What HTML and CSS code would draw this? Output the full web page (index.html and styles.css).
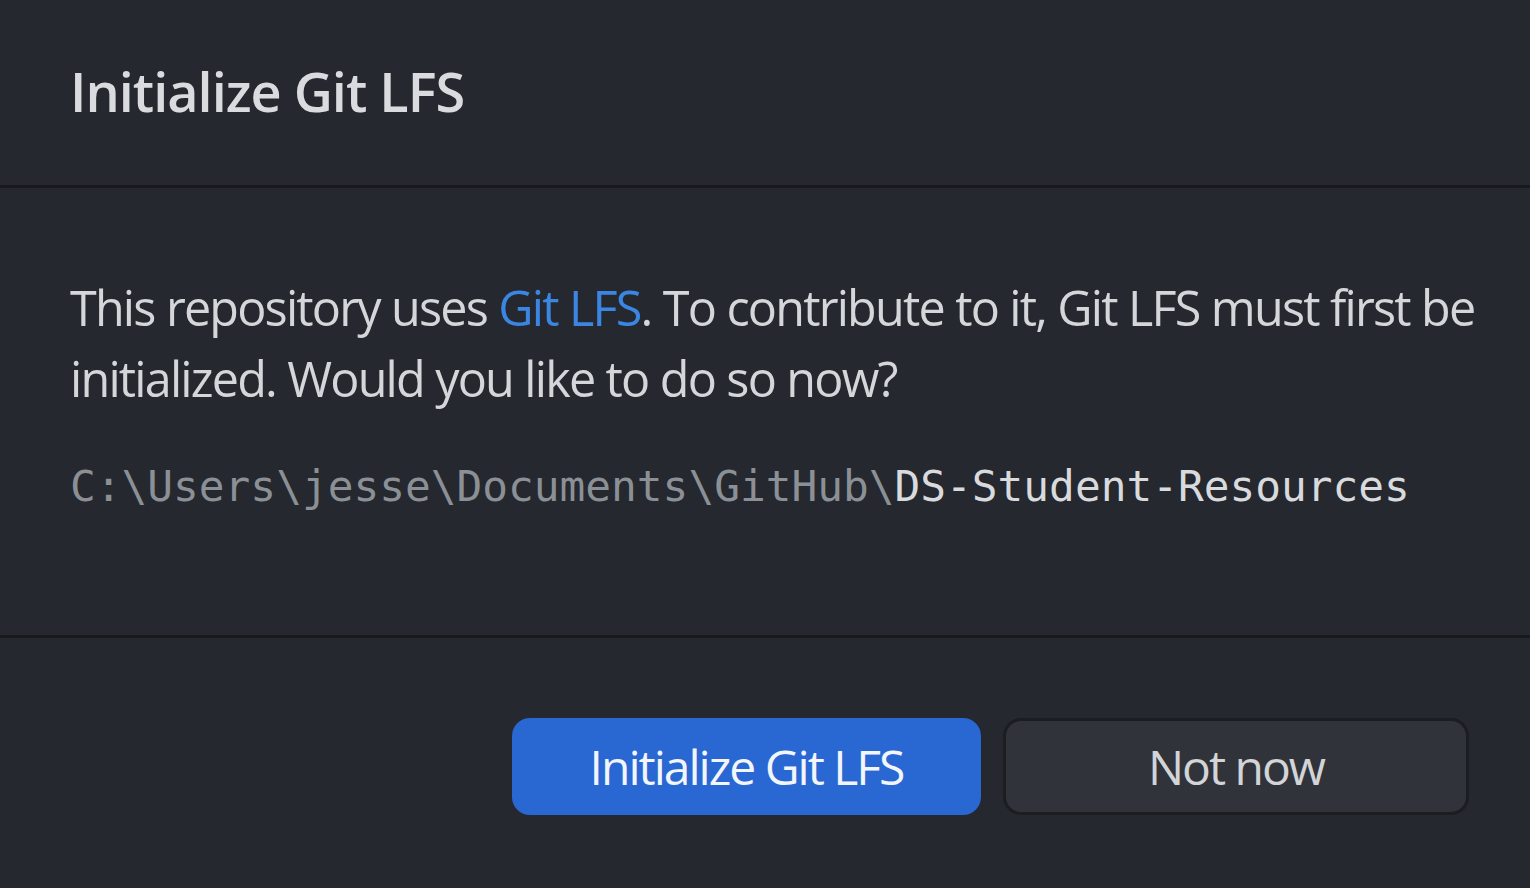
FILE: index.html
```html
<!DOCTYPE html>
<html lang="en">
<head>
<meta charset="utf-8">
<title>Initialize Git LFS</title>
<link rel="stylesheet" href="styles.css">
</head>
<body>
<div class="dialog">
  <header class="dialog-header">
    <h1 class="dialog-title">Initialize Git LFS</h1>
  </header>
  <section class="dialog-body">
    <p class="message">This repository uses <a class="link" href="#">Git LFS</a>. To contribute to it, Git LFS must first be initialized. Would you like to do so now?</p>
    <p class="path"><span class="path-dir">C:\Users\jesse\Documents\GitHub\</span><span class="path-name">DS-Student-Resources</span></p>
  </section>
  <footer class="dialog-footer">
    <button class="btn btn-primary" type="button">Initialize Git LFS</button>
    <button class="btn btn-secondary" type="button">Not now</button>
  </footer>
</div>
</body>
</html>
```

FILE: styles.css
```css
html, body {
  margin: 0;
  padding: 0;
  background: #25282e;
}

body {
  width: 1530px;
  height: 888px;
  overflow: hidden;
  font-family: "Open Sans", "Noto Sans", sans-serif;
  color: #d4d6d9;
}

.dialog {
  display: flex;
  flex-direction: column;
  height: 888px;
  background: #25282e;
}

.dialog-header {
  height: 188px;
  box-sizing: border-box;
  padding: 56px 70px 0;
  border-bottom: 3px solid #17191c;
}

.dialog-title {
  margin: 0;
  font-size: 54px;
  font-weight: 650;
  line-height: 70px;
  color: #d9dbde;
  letter-spacing: -1px;
}

.dialog-body {
  height: 450px;
  box-sizing: border-box;
  padding: 84px 50px 0 70px;
  border-bottom: 3px solid #17191c;
}

.message {
  margin: 0;
  font-size: 48.5px;
  font-weight: 450;
  line-height: 71px;
  color: #d4d6d9;
  letter-spacing: -1.8px;
  word-spacing: 0.5px;
}

.link {
  color: #3b86e3;
  text-decoration: none;
}

.path {
  margin: 42px 0 0;
  font-family: "DejaVu Sans Mono", "Liberation Mono", monospace;
  font-size: 42.8px;
  line-height: 60px;
  white-space: nowrap;
}

.path-dir {
  color: #8b9097;
}

.path-name {
  color: #d8dadd;
}

.dialog-footer {
  flex: 1;
  display: flex;
  justify-content: flex-end;
  align-items: flex-start;
  gap: 22px;
  padding: 80px 61px 0 0;
}

.btn {
  height: 97px;
  box-sizing: border-box;
  border-radius: 18px;
  font-family: "Open Sans", "Noto Sans", sans-serif;
  font-size: 48px;
  font-weight: 450;
  letter-spacing: -2px;
  cursor: pointer;
}

.btn-primary {
  width: 469px;
  background: #2967d3;
  border: none;
  color: #f2f5fa;
}

.btn-secondary {
  width: 466px;
  background: #30333a;
  border: 3px solid #1b1d21;
  color: #d2d4d7;
}
```
